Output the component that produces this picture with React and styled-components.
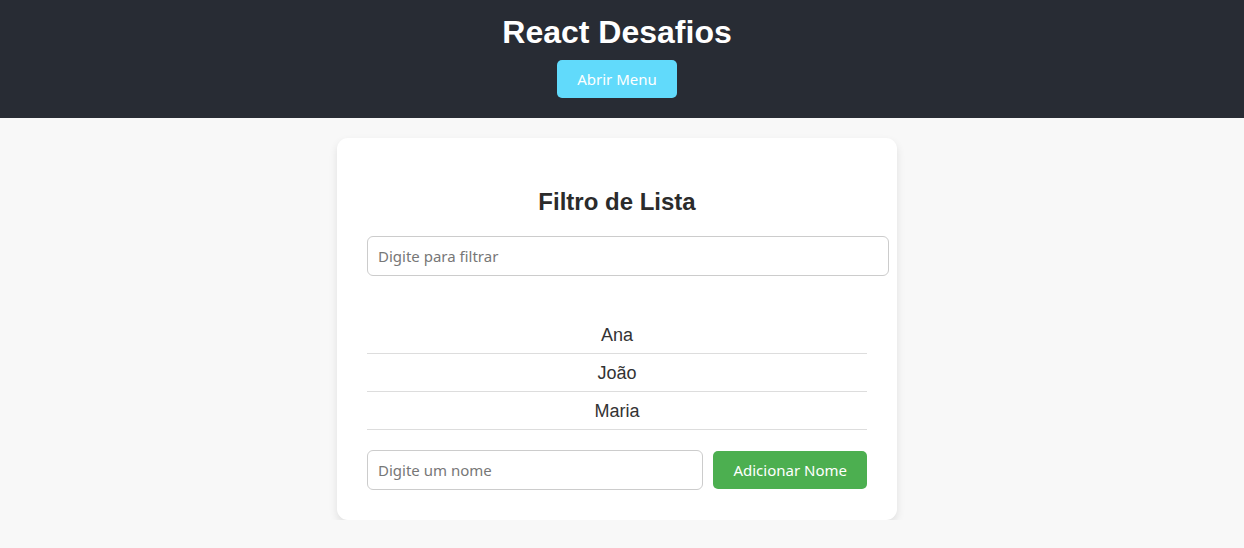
import React, { useState } from "react";
import styled, { createGlobalStyle } from "styled-components";

const GlobalStyle = createGlobalStyle`
  html, body { margin: 0; padding: 0; }
  body {
    background: #f8f8f8;
    font-family: "Liberation Sans", Arial, sans-serif;
    color: #333;
  }
`;

const Header = styled.header`
  background: #282c34;
  height: 118px;
  box-sizing: border-box;
  padding: 14px 10px 20px 0;
  display: flex;
  flex-direction: column;
  align-items: center;
`;

const Title = styled.h1`
  margin: 0 0 9px;
  font-size: 32px;
  line-height: normal;
  font-weight: 700;
  color: #ffffff;
`;

const UiButton = styled.button`
  font-family: "Noto Sans", "Open Sans", sans-serif;
  font-size: 15px;
  line-height: 18px;
  padding: 10px 20px;
  border: none;
  border-radius: 5px;
  color: #ffffff;
  background: ${(p) => p.$bg};
  cursor: pointer;
  white-space: nowrap;
`;

const Main = styled.main`
  display: flex;
  justify-content: center;
  padding: 20px 10px 0 0;
`;

const Card = styled.section`
  width: 560px;
  box-sizing: border-box;
  background: #ffffff;
  border-radius: 11px;
  box-shadow: 0 4px 8px rgba(0, 0, 0, 0.1);
  padding: 30px;
`;

const CardTitle = styled.h2`
  margin: 20px 0;
  font-size: 24px;
  line-height: normal;
  font-weight: 700;
  text-align: center;
  color: #2b2b2b;
`;

const TextInput = styled.input`
  font-family: "Noto Sans", "Open Sans", sans-serif;
  font-size: 15px;
  line-height: 18px;
  padding: 10px;
  border: 1px solid #cccccc;
  border-radius: 6px;
  color: #333;
  outline: none;
  background: #ffffff;
  width: ${(p) => (p.$full ? "100%" : "auto")};
  flex: ${(p) => (p.$full ? "none" : "1")};
  min-width: 0;
  &::placeholder { color: #777; }
`;

const List = styled.ul`
  list-style: none;
  margin: 40px 0 20px;
  padding: 0;
`;

const Item = styled.li`
  padding: 9px 8px 7px;
  font-size: 18px;
  line-height: 21px;
  text-align: center;
  color: #333;
  border-bottom: 1px solid #dddddd;
`;

const AddRow = styled.div`
  display: flex;
  align-items: center;
  gap: 10px;
`;

export default function App() {
  const [filter, setFilter] = useState("");
  const [name, setName] = useState("");
  const [names, setNames] = useState(["Ana", "João", "Maria"]);
  const shown = names.filter((n) => n.toLowerCase().includes(filter.toLowerCase()));
  const add = () => {
    if (name.trim()) {
      setNames([...names, name.trim()]);
      setName("");
    }
  };
  return (
    <>
      <GlobalStyle />
      <Header>
        <Title>React Desafios</Title>
        <UiButton $bg="#61dafb">Abrir Menu</UiButton>
      </Header>
      <Main>
        <Card>
          <CardTitle>Filtro de Lista</CardTitle>
          <TextInput
            $full
            placeholder="Digite para filtrar"
            value={filter}
            onChange={(e) => setFilter(e.target.value)}
          />
          <List>
            {shown.map((n) => (
              <Item key={n}>{n}</Item>
            ))}
          </List>
          <AddRow>
            <TextInput
              placeholder="Digite um nome"
              value={name}
              onChange={(e) => setName(e.target.value)}
            />
            <UiButton $bg="#4caf50" onClick={add}>Adicionar Nome</UiButton>
          </AddRow>
        </Card>
      </Main>
    </>
  );
}
